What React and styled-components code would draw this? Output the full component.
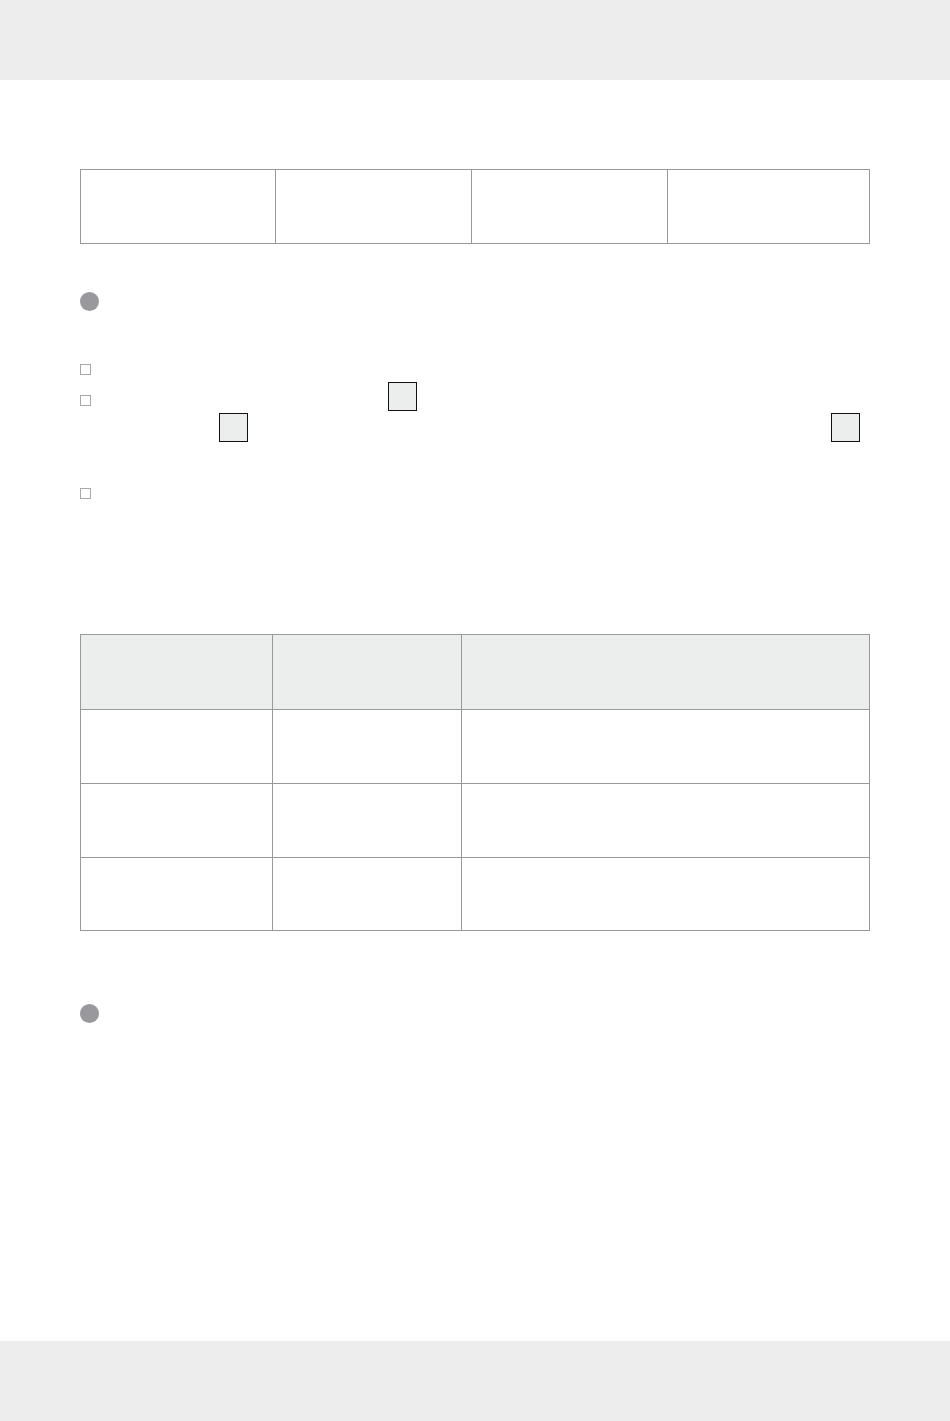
import React from "react";
import styled, { createGlobalStyle } from "styled-components";

const GlobalStyle = createGlobalStyle`
  html, body {
    margin: 0;
    padding: 0;
    background: #ffffff;
    font-family: "Open Sans", "Liberation Sans", sans-serif;
    color: #231f20;
  }
`;

const Page = styled.div`
  display: flex;
  flex-direction: column;
  min-height: 1421px;
  width: 950px;
`;

const Band = styled.div`
  height: 80px;
  background: #ecedec;
  flex-shrink: 0;
`;

const Content = styled.main`
  flex: 1;
  padding: 89px 80px 0 80px;
  display: flex;
  flex-direction: column;
`;

const Grid = styled.div`
  display: grid;
  grid-template-columns: ${(p) => p.$cols};
  grid-auto-rows: ${(p) => p.$rows};
  gap: 1px;
  padding: 1px;
  background: #999999;
  width: 790px;
  box-sizing: border-box;
  margin-top: ${(p) => p.$top || 0}px;
`;

const Cell = styled.div`
  background: ${(p) => (p.$head ? "#eceeed" : "#ffffff")};
`;

const Marker = styled.div`
  width: 19px;
  height: 19px;
  border-radius: 50%;
  background: #99989d;
  margin-top: ${(p) => p.$top}px;
`;

const List = styled.ul`
  list-style: none;
  margin: 40px 0 0 0;
  padding: 0;
`;

const Item = styled.li`
  display: grid;
  grid-template-columns: 25px 1fr;
`;

const Check = styled.span`
  width: 11px;
  height: 11px;
  margin-top: 13px;
  box-sizing: border-box;
  border: 1px solid #a8a8a8;
  background: #fff;
`;

const Lines = styled.div`
  display: flex;
  flex-direction: column;
`;

const Line = styled.div`
  height: 31px;
  display: flex;
  align-items: flex-start;
`;

const Key = styled.span`
  width: 29px;
  height: 29px;
  box-sizing: border-box;
  border: 1px solid #111;
  background: #eceeed;
  margin-left: ${(p) => p.$gap}px;
`;

const specCells = [0, 1, 2, 3];
const tableRows = [true, false, false, false];

export default function App() {
  return (
    <>
      <GlobalStyle />
      <Page>
        <Band />
        <Content>
          <Grid $cols="194px 195px 195px 1fr" $rows="73px">
            {specCells.map((i) => (
              <Cell key={i} />
            ))}
          </Grid>

          <Marker $top={48} />

          <List>
            <Item>
              <Check />
              <Lines>
                <Line />
              </Lines>
            </Item>
            <Item>
              <Check />
              <Lines>
                <Line>
                  <Key $gap={283} />
                </Line>
                <Line>
                  <Key $gap={114} />
                  <Key $gap={583} />
                </Line>
                <Line />
              </Lines>
            </Item>
            <Item>
              <Check />
              <Lines>
                <Line />
              </Lines>
            </Item>
          </List>

          <Grid $cols="191px 188px 1fr" $rows="74px 73px 73px 72px" $top={128}>
            {tableRows.map((head, r) =>
              [0, 1, 2].map((c) => <Cell key={`${r}-${c}`} $head={head} />)
            )}
          </Grid>

          <Marker $top={73} />
        </Content>
        <Band />
      </Page>
    </>
  );
}
